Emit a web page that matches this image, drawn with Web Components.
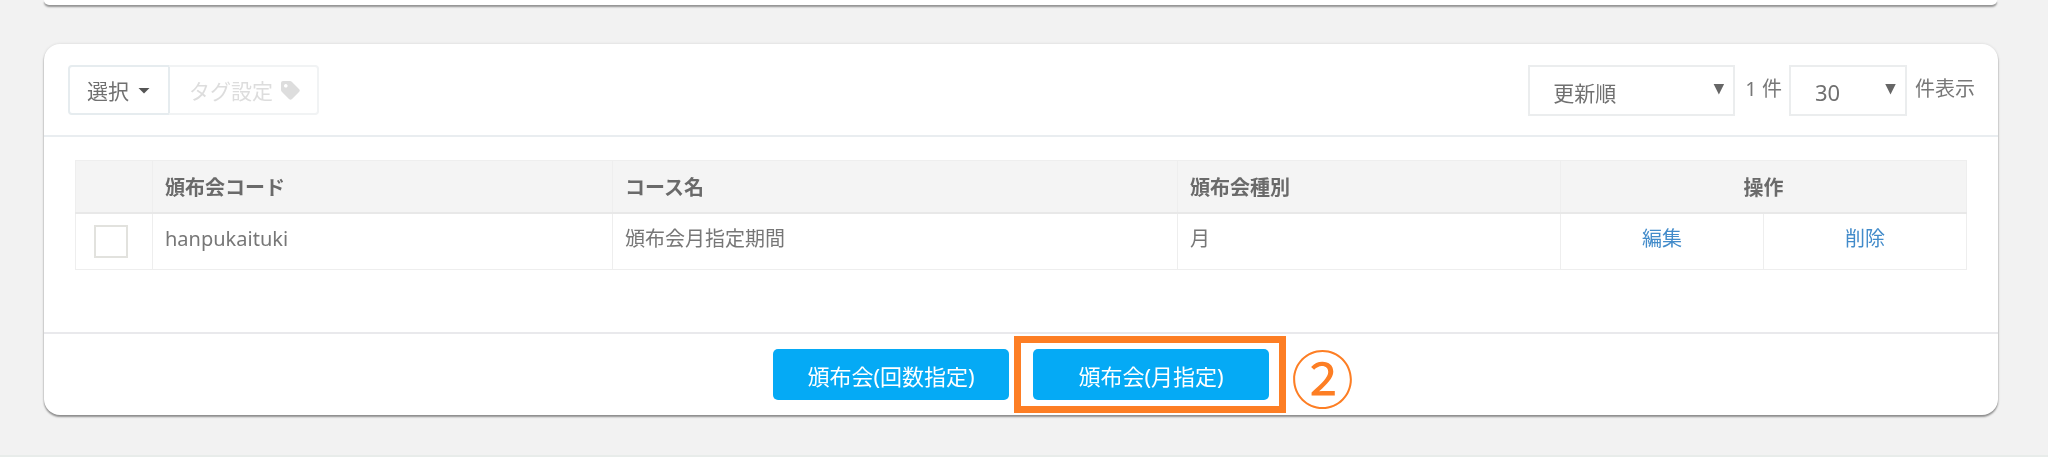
<!DOCTYPE html>
<html lang="ja">
<head>
<meta charset="utf-8">
<title>頒布会</title>
<style>
  html, body { margin: 0; padding: 0; background: #f2f2f2; }
  body {
    width: 2048px;
    height: 461px;
    overflow: hidden;
    font-family: "Noto Sans", "Noto Sans CJK JP", sans-serif;
    color: #666;
  }
</style>
</head>
<body>
<page-view></page-view>

<script>
const FONT = '"Noto Sans", "Noto Sans CJK JP", sans-serif';

class SelectBox extends HTMLElement {
  connectedCallback() {
    const width = this.getAttribute('width') || '207';
    const pad = this.getAttribute('pad') || '23';
    const size = this.getAttribute('size') || '21';
    this.attachShadow({ mode: 'open' }).innerHTML = `
      <style>
        :host { display: block; box-sizing: border-box; width: ${width}px; height: 51px; }
        .box {
          box-sizing: border-box;
          height: 100%;
          display: flex;
          align-items: center;
          justify-content: space-between;
          padding: 2px 9px 0 ${pad}px;
          border: 2px solid #ebedee;
          background: #fff;
          font-size: ${size}px;
          color: #707070;
        }
        .arrow {
          width: 11px;
          height: 11px;
          margin-top: -5px;
          background: #666;
          clip-path: polygon(0 0, 100% 0, 50% 100%);
        }
      </style>
      <div class="box"><span><slot></slot></span><i class="arrow"></i></div>
    `;
  }
}
customElements.define('select-box', SelectBox);

class ToolBar extends HTMLElement {
  connectedCallback() {
    this.attachShadow({ mode: 'open' }).innerHTML = `
      <style>
        :host {
          display: flex;
          box-sizing: border-box;
          height: 93px;
          padding: 21px 23px 0 24px;
          justify-content: space-between;
          align-items: flex-start;
          border-bottom: 2px solid #e9edf0;
        }
        .group {
          display: flex;
          height: 50px;
          box-sizing: border-box;
          font-size: 21px;
        }
        .group div {
          box-sizing: border-box;
          display: flex;
          align-items: center;
          border: 2px solid #e6ecef;
        }
        .pick {
          width: 102px;
          padding-left: 17px;
          gap: 9px;
          color: #707070;
          border-radius: 4px 0 0 4px;
        }
        .caret {
          width: 12px;
          height: 6px;
          margin-top: 1px;
          background: #555;
          clip-path: polygon(0 0, 100% 0, 50% 100%);
        }
        .group .tag {
          width: 150px;
          margin-left: -1px;
          padding-left: 20px;
          gap: 8px;
          color: #ddd;
          border-color: #f1f3f4;
          border-left: none;
          border-radius: 0 4px 4px 0;
        }
        .right {
          display: flex;
          align-items: flex-start;
          font-size: 20px;
          color: #777;
        }
        .right span { line-height: 48px; white-space: nowrap; }
        .count { margin: 0 7px 0 10px; }
        .unit { margin-left: 8px; }
      </style>
      <div class="group">
        <div class="pick">選択<i class="caret"></i></div>
        <div class="tag">タグ設定
          <svg width="19" height="19" viewBox="0 0 19 19"><path fill="#ddd" fill-rule="evenodd" d="M2 0h7q1 0 2 1l7 7q1.500 1.500 0 3l-7 7q-1.500 1.500-3 0l-7-7q-1-1-1-2V2q0-2 2-2zM4.800 3a1.800 1.800 0 1 0 .01 0z"/></svg>
        </div>
      </div>
      <div class="right">
        <select-box width="207" pad="23">更新順</select-box>
        <span class="count">1 件</span>
        <select-box width="118" pad="24" size="22">30</select-box>
        <span class="unit">件表示</span>
      </div>
    `;
  }
}
customElements.define('tool-bar', ToolBar);

class CourseTable extends HTMLElement {
  connectedCallback() {
    this.attachShadow({ mode: 'open' }).innerHTML = `
      <style>
        :host { display: block; padding: 23px 32px 0 31px; height: 195px; box-sizing: border-box; }
        table {
          width: 1891px;
          table-layout: fixed;
          border-collapse: collapse;
          font-size: 20px;
          color: #777;
        }
        th, td {
          box-sizing: border-box;
          border: 1px solid #eee;
          padding: 0 0 0 12px;
          text-align: left;
          white-space: nowrap;
        }
        th {
          height: 52px;
          background: #f4f4f4;
          font-weight: bold;
          border-bottom: 2px solid #e8e8e8;
          color: #6a6a6a;
        }
        td { height: 57px; vertical-align: top; line-height: 50px; }
        .center { text-align: center; padding-left: 0; }
        a { color: #428bca; text-decoration: none; }
        .check {
          display: block;
          box-sizing: border-box;
          width: 34px;
          height: 33px;
          margin: 11px 0 0 7px;
          border: 2px solid #e2e2de;
          background: #fff;
        }
        .no-pad { padding: 0 0 0 11px; }
      </style>
      <table>
        <colgroup>
          <col style="width:77px"><col style="width:460px"><col style="width:565px">
          <col style="width:383px"><col style="width:203px"><col style="width:203px">
        </colgroup>
        <thead>
          <tr>
            <th></th>
            <th>頒布会コード</th>
            <th>コース名</th>
            <th>頒布会種別</th>
            <th colspan="2" class="center">操作</th>
          </tr>
        </thead>
        <tbody>
          <tr>
            <td class="no-pad"><i class="check"></i></td>
            <td>hanpukaituki</td>
            <td>頒布会月指定期間</td>
            <td>月</td>
            <td class="center"><a href="#">編集</a></td>
            <td class="center"><a href="#">削除</a></td>
          </tr>
        </tbody>
      </table>
    `;
  }
}
customElements.define('course-table', CourseTable);

class ActionButton extends HTMLElement {
  connectedCallback() {
    this.attachShadow({ mode: 'open' }).innerHTML = `
      <style>
        :host {
          display: flex;
          box-sizing: border-box;
          width: 236px;
          height: 51px;
          align-items: center;
          justify-content: center;
          background: #05aaf5;
          border-radius: 5px;
          color: #fff;
          font-size: 22px;
        }
      </style>
      <slot></slot>
    `;
  }
}
customElements.define('action-button', ActionButton);

class FooterBar extends HTMLElement {
  connectedCallback() {
    this.attachShadow({ mode: 'open' }).innerHTML = `
      <style>
        :host {
          display: flex;
          position: relative;
          box-sizing: border-box;
          height: 83px;
          padding-top: 15px;
          padding-left: 729px;
          gap: 24px;
          border-top: 2px solid #e9e9ec;
        }
        .mark {
          position: absolute;
          left: 970px;
          top: 2px;
          box-sizing: border-box;
          width: 272px;
          height: 77px;
          border: 7px solid #fd7e24;
        }
        .num {
          position: absolute;
          left: 1247px;
          top: 5px;
          color: #fd7e24;
          font-family: "Noto Sans CJK JP", sans-serif;
          font-size: 63px;
          line-height: 74px;
        }
      </style>
      <action-button>頒布会(回数指定)</action-button>
      <action-button>頒布会(月指定)</action-button>
      <div class="mark"></div>
      <div class="num">②</div>
    `;
  }
}
customElements.define('footer-bar', FooterBar);

class PageView extends HTMLElement {
  connectedCallback() {
    this.attachShadow({ mode: 'open' }).innerHTML = `
      <style>
        :host { display: block; font-family: ${FONT}; filter: blur(0.4px); }
        .top-card {
          box-sizing: border-box;
          height: 5px;
          margin: 0 51px 39px 44px;
          background: #fff;
          border-radius: 0 0 16px 16px;
          box-shadow: 0 2px 2px rgba(0,0,0,.4);
        }
        .card {
          box-sizing: border-box;
          height: 371px;
          margin: 0 50px 0 44px;
          background: #fff;
          border-radius: 16px;
          box-shadow: 0 2px 2px rgba(0,0,0,.4), 0 0 3px rgba(0,0,0,.12);
        }
        .end {
          height: 2px;
          margin-top: 40px;
          background: #e8ecea;
        }
        .below { height: 4px; background: #fff; }
      </style>
      <div class="top-card"></div>
      <div class="card">
        <tool-bar></tool-bar>
        <course-table></course-table>
        <footer-bar></footer-bar>
      </div>
      <div class="end"></div>
      <div class="below"></div>
    `;
  }
}
customElements.define('page-view', PageView);
</script>
</body>
</html>
